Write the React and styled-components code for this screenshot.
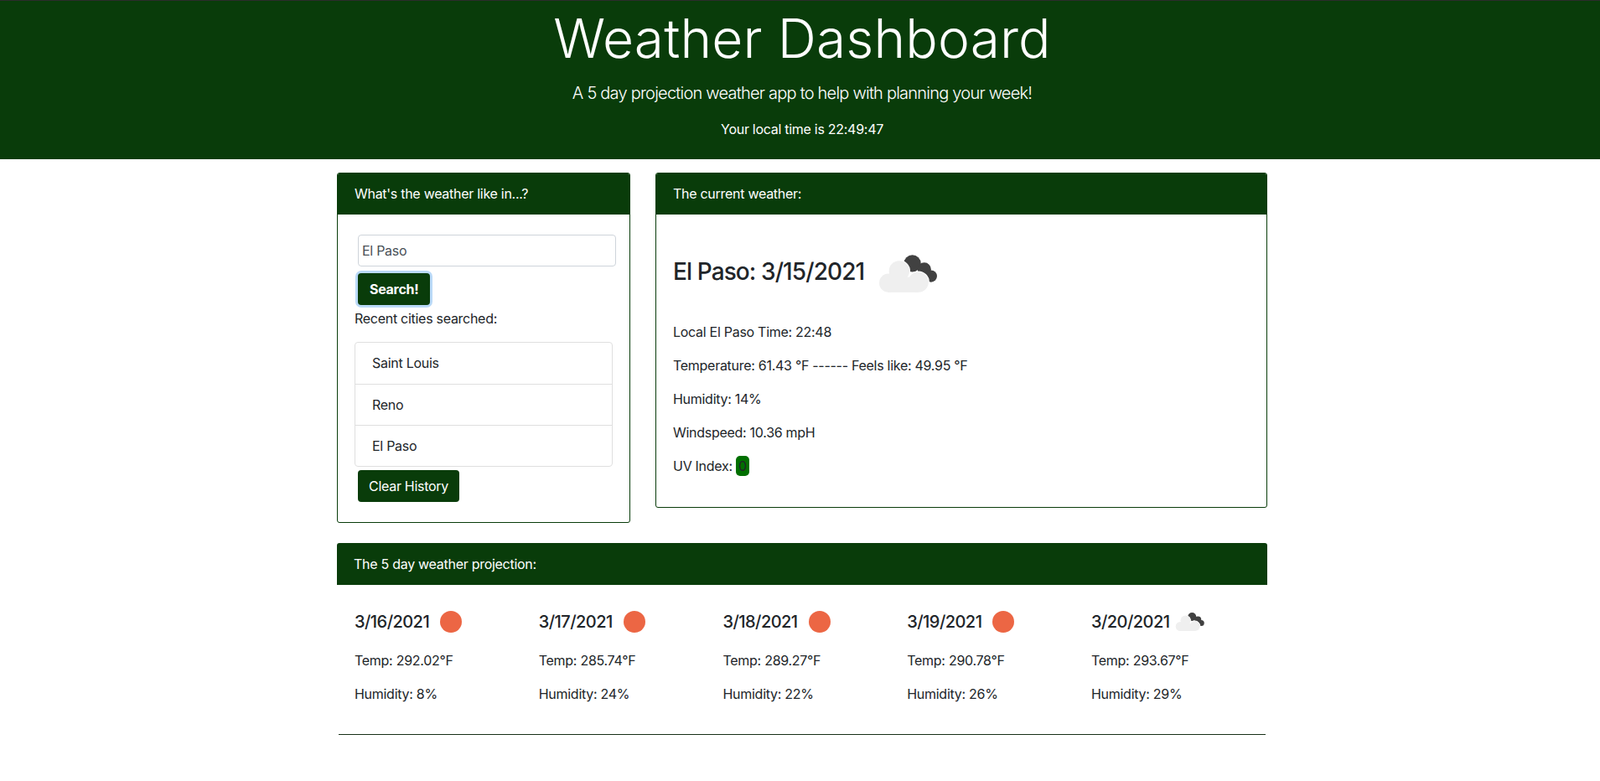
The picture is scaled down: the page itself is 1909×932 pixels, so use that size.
import React from 'react';
import styled, { createGlobalStyle } from 'styled-components';

const GlobalStyle = createGlobalStyle`
  * {
    box-sizing: border-box;
  }

  body {
    margin: 0;
    background: #fff;
    color: #212529;
    font-family: Inter, "Liberation Sans", sans-serif;
    font-size: 16px;
    line-height: 24px;
    letter-spacing: -0.28px;
  }
`;

const green = '#093c0a';

const Header = styled.header`
  height: 190px;
  padding: 6px 0 0 5px;
  background: ${green};
  border-top: 1px solid #2c2c2c;
  color: #fff;
  text-align: center;
`;

const Title = styled.h1`
  margin: 0;
  font-size: 64px;
  font-weight: 300;
  line-height: 77px;
  letter-spacing: 0.15px;
`;

const Lead = styled.p`
  margin: 12px 0 0;
  font-size: 20px;
  font-weight: 300;
  line-height: 30px;
  letter-spacing: -0.77px;
`;

const Clock = styled.p`
  margin: 16px 0 0;
`;

const Container = styled.main`
  width: 1110px;
  margin: 16px auto 0;
  position: relative;
  left: 2.5px;
`;

const TopRow = styled.div`
  display: grid;
  grid-template-columns: 350px 730px;
  gap: 30px;
  align-items: start;
`;

const Card = styled.section`
  border: ${({ $plain }) => ($plain ? 'none' : `1px solid ${green}`)};
  border-radius: 3px;
  overflow: hidden;
  margin-top: ${({ $top }) => $top || 0}px;
`;

const CardHead = styled.div`
  height: ${({ $tall }) => ($tall ? 50 : 49)}px;
  padding: ${({ $tall }) => ($tall ? 13 : 12)}px 20px;
  background: ${green};
  color: #fff;
`;

const SearchBody = styled.div`
  padding: 24px 20px 25px;
  height: 367px;
`;

const CityInput = styled.input`
  display: block;
  width: 308px;
  height: 38px;
  margin-left: 4px;
  padding: 0 4px;
  border: 1px solid #ced4da;
  border-radius: 4px;
  color: #495057;
  font: inherit;
  letter-spacing: inherit;
`;

const Button = styled.button`
  display: block;
  height: 38px;
  margin: ${({ $mt }) => $mt}px 0 0 4px;
  padding: 0 ${({ $bold }) => ($bold ? 14 : 13)}px;
  border: none;
  border-radius: 4px;
  background: ${green};
  color: #fff;
  font: inherit;
  letter-spacing: inherit;
  font-weight: ${({ $bold }) => ($bold ? 700 : 400)};
  box-shadow: ${({ $focus }) => ($focus ? '0 0 0 3px #b9d9f7' : 'none')};
`;

const RecentLabel = styled.div`
  margin-top: 4px;
`;

const CityList = styled.ul`
  width: 308px;
  margin: 16px 0 0;
  padding: 0;
  list-style: none;
  border: 1px solid #dfdfdf;
  border-radius: 4px;
`;

const CityItem = styled.li`
  height: 49px;
  padding: 12px 20px;
  border-top: ${({ $first }) => ($first ? 'none' : '1px solid #dfdfdf')};
`;

const CurrentBody = styled.div`
  height: 349px;
  padding: 24px 20px 0;
`;

const CityRow = styled.div`
  display: flex;
  align-items: center;
  height: 88px;
`;

const CityHeading = styled.h2`
  margin: 0;
  font-size: 28px;
  font-weight: 500;
  line-height: 34px;
  letter-spacing: -0.9px;
`;

const Line = styled.p`
  margin: 16px 0 0;
  line-height: 24px;
`;

const UvBadge = styled.span`
  display: inline-block;
  padding: 0 3px;
  height: 24px;
  border-radius: 5px;
  background: #006f00;
  color: #212529;
`;

const Forecast = styled.div`
  display: grid;
  grid-template-columns: repeat(5, 219.75px);
  padding: 26px 21px 0;
`;

const DayRow = styled.div`
  display: flex;
  align-items: center;
  height: 36px;
`;

const DayDate = styled.h3`
  margin: 0;
  font-size: 20px;
  font-weight: 500;
  line-height: 24px;
  letter-spacing: -0.55px;
`;

const Sun = styled.span`
  display: block;
  width: 26px;
  height: 26px;
  margin-left: 13px;
  border-radius: 50%;
  background: #ec6644;
`;

const CloudSvg = styled.svg`
  display: block;
  flex: none;
  margin: ${({ $drop }) => $drop}px 0 0 ${({ $gap }) => $gap}px;
  width: ${({ $w }) => $w}px;
  height: ${({ $h }) => $h}px;
`;

const Rule = styled.hr`
  margin: 36px 2px 0;
  border: none;
  border-top: 1px solid #173017;
`;

const lightShape = (
  <>
    <circle cx="31" cy="57" r="11" />
    <circle cx="43.5" cy="43" r="12" />
    <circle cx="66" cy="56" r="12" />
    <rect x="30" y="50" width="36" height="18" />
  </>
);

const Cloud = ({ width, height, gap, drop = 0 }) => (
  <CloudSvg viewBox="19 24 69 44" $w={width} $h={height} $gap={gap} $drop={drop}>
    <g fill="#414141">
      <circle cx="59" cy="34" r="10" />
      <circle cx="73" cy="41" r="8" />
      <circle cx="81" cy="49" r="7" />
    </g>
    <g fill="#fff" stroke="#fff" strokeWidth="2">
      {lightShape}
    </g>
    <g fill="#efefef">{lightShape}</g>
  </CloudSvg>
);

const days = [
  { date: '3/16/2021', temp: '292.02', humidity: '8%' },
  { date: '3/17/2021', temp: '285.74', humidity: '24%' },
  { date: '3/18/2021', temp: '289.27', humidity: '22%' },
  { date: '3/19/2021', temp: '290.78', humidity: '26%' },
  { date: '3/20/2021', temp: '293.67', humidity: '29%', cloudy: true },
];

const cities = ['Saint Louis', 'Reno', 'El Paso'];

const App = () => (
  <>
    <GlobalStyle />
    <Header>
      <Title>Weather Dashboard</Title>
      <Lead>A 5 day projection weather app to help with planning your week!</Lead>
      <Clock>Your local time is 22:49:47</Clock>
    </Header>
    <Container>
      <TopRow>
        <Card>
          <CardHead>What's the weather like in...?</CardHead>
          <SearchBody>
            <CityInput defaultValue="El Paso" />
            <Button $mt={8} $bold $focus>
              Search!
            </Button>
            <RecentLabel>Recent cities searched:</RecentLabel>
            <CityList>
              {cities.map((city, i) => (
                <CityItem key={city} $first={i === 0}>
                  {city}
                </CityItem>
              ))}
            </CityList>
            <Button $mt={4}>Clear History</Button>
          </SearchBody>
        </Card>
        <Card>
          <CardHead>The current weather:</CardHead>
          <CurrentBody>
            <CityRow>
              <CityHeading>El Paso: 3/15/2021</CityHeading>
              <Cloud width={70} height={45} gap={17} drop={4} />
            </CityRow>
            <Line>Local El Paso Time: 22:48</Line>
            <Line>Temperature: 61.43 °F ------ Feels like: 49.95 °F</Line>
            <Line>Humidity: 14%</Line>
            <Line>Windspeed: 10.36 mpH</Line>
            <Line>
              UV Index: <UvBadge>0</UvBadge>
            </Line>
          </CurrentBody>
        </Card>
      </TopRow>
      <Card $plain $top={24}>
        <CardHead $tall>The 5 day weather projection:</CardHead>
        <Forecast>
          {days.map(day => (
            <div key={day.date}>
              <DayRow>
                <DayDate>{day.date}</DayDate>
                {day.cloudy ? <Cloud width={35} height={22} gap={7} /> : <Sun />}
              </DayRow>
              <Line>Temp: {day.temp}°F</Line>
              <Line>Humidity: {day.humidity}</Line>
            </div>
          ))}
        </Forecast>
      </Card>
      <Rule />
    </Container>
  </>
);

export default App;
